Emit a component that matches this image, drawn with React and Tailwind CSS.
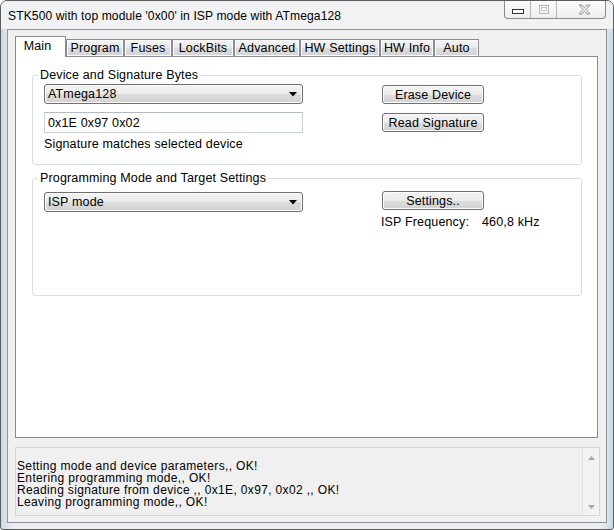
import React from "react";

const tabs = [
  { label: "Main", w: "w-[51px]", active: true },
  { label: "Program", w: "w-[58px]" },
  { label: "Fuses", w: "w-[48px]" },
  { label: "LockBits", w: "w-[62px]" },
  { label: "Advanced", w: "w-[66px]" },
  { label: "HW Settings", w: "w-[80px]" },
  { label: "HW Info", w: "w-[54px]" },
  { label: "Auto", w: "w-[45px]" },
];

function Arrow() {
  return (
    <svg width="8" height="5" viewBox="0 0 8 5" className="block">
      <path d="M0 0 H8 L4 4.5 Z" fill="#000" />
    </svg>
  );
}

function Combo({ text }) {
  return (
    <div className="w-[259px] h-[20px] border border-[#707070] rounded-[3px] bg-[linear-gradient(#f3f3f3,#ebebeb_50%,#dddddd_50%,#d2d2d2)] flex items-center pl-[3px] pr-[5px] shadow-[inset_0_0_0_1px_#fcfcfc]">
      <span className="flex-1 leading-[14px]">{text}</span>
      <Arrow />
    </div>
  );
}

function Btn({ text }) {
  return (
    <div className="w-[102px] h-[19px] border border-[#707070] rounded-[3px] bg-[linear-gradient(#f3f3f3,#ebebeb_50%,#dddddd_50%,#d2d2d2)] flex items-center justify-center leading-[14px] shadow-[inset_0_0_0_1px_#fcfcfc]">
      {text}
    </div>
  );
}

function Group({ title, h, children, className = "" }) {
  return (
    <div className={`relative w-[550px] ${h} border border-[#d5dfe5] rounded-[3px] ${className}`}>
      <span className="absolute left-[5px] top-[-8px] px-[2px] bg-white leading-[14px]">{title}</span>
      {children}
    </div>
  );
}

export default function App() {
  return (
    <div className="w-[614px] h-[530px] relative bg-[linear-gradient(90deg,#c9d9ea,#eceef1_2%,#eceef1_98%,#c9d9ea)] border border-[#5b5b5b] rounded-t-[7px] rounded-b-[3px] flex flex-col text-[12.5px] tracking-[0.15px] text-black [font-family:'Liberation_Sans',Arial,sans-serif] overflow-hidden">
      {/* title bar */}
      <div className="h-[28px] shrink-0 flex items-start bg-[#f1f2f4]">
        <span className="ml-[7px] mt-[8px] leading-[14px] text-[12.1px] tracking-[0.1px]">
          STK500 with top module '0x00' in ISP mode with ATmega128
        </span>
      </div>
      {/* caption buttons */}
      <div className="absolute top-[-1px] right-[7px] h-[19px] flex border border-[#8a8a8a] border-t-0 rounded-b-[4px] bg-[linear-gradient(#fdfdfd,#eeeeee)] overflow-hidden">
        <div className="w-[26px] flex items-center justify-center border-r border-[#b5b5b5]">
          <svg width="12" height="5" viewBox="0 0 12 5" className="mt-[4px]">
            <rect x="0.5" y="0.5" width="11" height="4" fill="#fff" stroke="#333" />
          </svg>
        </div>
        <div className="w-[26px] flex items-center justify-center border-r border-[#b5b5b5]">
          <svg width="10" height="9" viewBox="0 0 10 9">
            <rect x="0.5" y="0.5" width="9" height="8" fill="none" stroke="#b8b8b8" />
            <rect x="2.5" y="2.5" width="5" height="3" fill="none" stroke="#c8c8c8" />
          </svg>
        </div>
        <div className="w-[48px] flex items-center justify-center pl-[6px]">
          <svg width="13" height="11" viewBox="0 0 13 11">
            <path
              d="M1 1 H4 L6.5 3.5 L9 1 H12 L8 5.5 L12 10 H9 L6.5 7.5 L4 10 H1 L5 5.5 Z"
              fill="#e8e8e8"
              stroke="#8c8c8c"
              strokeWidth="0.9"
            />
          </svg>
        </div>
      </div>

      {/* client area */}
      <div className="ml-[6px] mr-[6px] mb-[6px] flex-1 border border-[#8e9196] bg-[#f0f0f0] flex flex-col pl-[7px] pt-[6px]">
        {/* tabs */}
        <div className="h-[20px] flex items-end relative z-10">
          {tabs.map((t) =>
            t.active ? (
              <div
                key={t.label}
                className={`${t.w} h-[21px] -mb-px bg-white border border-b-0 border-[#898c95] flex items-start justify-center pt-[2px] leading-[14px]`}
              >
                <span className="-ml-[6px]">{t.label}</span>
              </div>
            ) : (
              <div
                key={t.label}
                className={`${t.w} h-[17px] bg-[linear-gradient(#f4f4f4,#e9e9e9_50%,#dcdcdc_50%,#d4d4d4)] border border-b-0 border-[#898c95] flex items-center justify-center leading-[14px] shadow-[inset_0_0_0_1px_#fbfbfb]`}
              >
                {t.label}
              </div>
            )
          )}
        </div>
        {/* pane */}
        <div className="w-[583px] h-[382px] bg-white border border-[#898c95] pl-[16px] pt-[18px]">
          <Group title="Device and Signature Bytes" h="h-[90px]">
            <div className="flex items-start pl-[11px] pt-[8px]">
              <div className="flex flex-col">
                <Combo text="ATmega128" />
                <div className="mt-[8px] w-[259px] h-[21px] border border-[#c9d0d6] border-t-[#b4bbc2] flex items-center pl-[3px] leading-[14px]">
                  0x1E 0x97 0x02
                </div>
                <div className="mt-[4px] leading-[14px]">Signature matches selected device</div>
              </div>
              <div className="ml-[79px] pt-[1px] flex flex-col gap-[9px]">
                <Btn text="Erase Device" />
                <Btn text="Read Signature" />
              </div>
            </div>
          </Group>
          <Group title="Programming Mode and Target Settings" h="h-[118px]" className="mt-[13px]">
            <div className="flex items-start pl-[11px]">
              <div className="pt-[13px]">
                <Combo text="ISP mode" />
              </div>
              <div className="ml-[79px] pt-[12px] flex flex-col">
                <Btn text="Settings.." />
                <div className="mt-[5px] flex leading-[14px] -ml-[1px]">
                  <span className="w-[101px]">ISP Frequency:</span>
                  <span>460,8 kHz</span>
                </div>
              </div>
            </div>
          </Group>
        </div>
        {/* log */}
        <div className="mt-[9px] w-[585px] h-[69px] border border-[#d3d6da] bg-[#f0f0f0] flex">
          <div className="flex-1 pl-[1px] pt-[12px] leading-[12px] text-[12px] tracking-[0.35px]">
            <div>Setting mode and device parameters,, OK!</div>
            <div>Entering programming mode,, OK!</div>
            <div>Reading signature from device ,, 0x1E, 0x97, 0x02 ,, OK!</div>
            <div>Leaving programming mode,, OK!</div>
          </div>
          <div className="w-[17px] border-l border-[#e3e3e3] bg-[#f3f3f3] flex flex-col items-center justify-between pt-[8px] pb-[6px]">
            <svg width="7" height="4" viewBox="0 0 7 4">
              <path d="M0 4 L3.5 0 L7 4 Z" fill="#a8a8a8" />
            </svg>
            <svg width="7" height="4" viewBox="0 0 7 4">
              <path d="M0 0 L7 0 L3.5 4 Z" fill="#a8a8a8" />
            </svg>
          </div>
        </div>
      </div>
    </div>
  );
}
